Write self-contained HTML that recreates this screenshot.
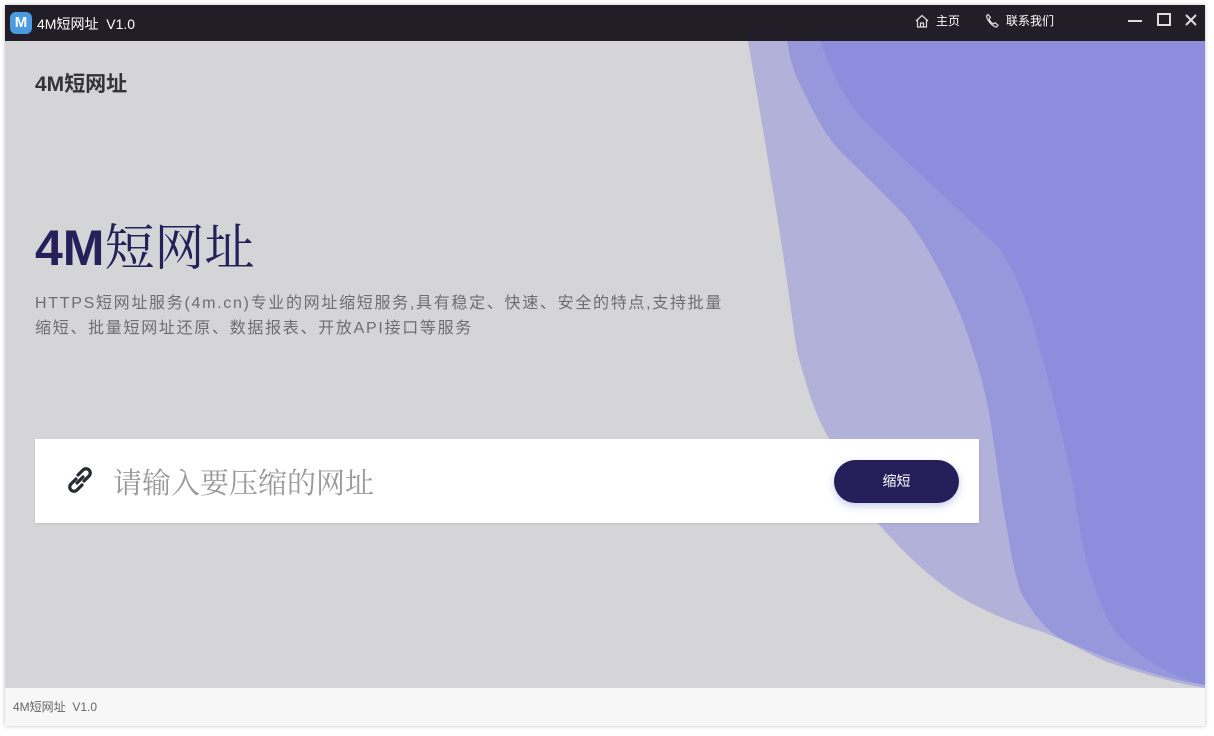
<!DOCTYPE html>
<html><head><meta charset="utf-8"><style>
*{margin:0;padding:0;box-sizing:border-box}
html,body{width:1214px;height:736px;overflow:hidden;background:#fff;font-family:"Liberation Sans","Noto Sans CJK SC",sans-serif}
.win{position:absolute;left:5px;top:5px;width:1200px;height:721px;box-shadow:0 0 4px rgba(0,0,0,.25)}
.tb{position:absolute;left:0;top:0;width:1200px;height:36px;background:#221e28;color:#fff}
.logo{position:absolute;left:5px;top:7px;width:22px;height:22px;border-radius:6px;background:#4a9be0;color:#fff;font-weight:bold;font-size:15px;text-align:center;line-height:22px}
.tt{position:absolute;left:32px;top:9px;font-size:14px}
.nav{position:absolute;top:7px;font-size:12px;color:#fff}
.main{position:absolute;left:0;top:36px;width:1200px;height:647px;background:#d5d5d7;overflow:hidden}
.foot{position:absolute;left:0;top:683px;width:1200px;height:38px;background:#f7f7f7;font-size:12px;color:#666;padding:10px 0 0 8px}
.h1{position:absolute;left:30px;top:27px;font-size:21px;font-weight:bold;color:#333}
.h2{position:absolute;left:30px;top:168px;font-size:50px;font-weight:bold;color:#26205a;line-height:70px}
.cj{font-family:"Noto Serif CJK SC",serif;font-weight:normal}
.desc{position:absolute;left:30px;top:250px;font-size:16px;line-height:25px;color:#6e6e72;width:760px;letter-spacing:1.7px;white-space:nowrap}
.card{position:absolute;left:30px;top:398px;width:944px;height:84px;background:#fff;box-shadow:0 1px 2px rgba(0,0,0,.1)}
.ph{position:absolute;left:78px;top:22px;font-size:29px;color:#9a9a9a;font-family:"Noto Serif CJK SC",serif}
.btn{position:absolute;left:799px;top:21px;width:125px;height:43px;border-radius:22px;background:#251e58;color:#fff;font-size:14px;text-align:center;line-height:43px;box-shadow:0 3px 8px rgba(80,80,200,.3)}
</style></head><body>
<div class="win">
<div class="tb">
<div class="logo">M</div>
<div class="tt">4M短网址&nbsp; V1.0</div>
<svg style="position:absolute;left:909px;top:8px" width="16" height="16" viewBox="0 0 16 16" fill="none" stroke="#ddd" stroke-width="1.2"><path d="M2 8L8 2.5 14 8M3.5 6.5V14h9V6.5M6.5 14v-4h3v4"/></svg>
<div class="nav" style="left:931px">主页</div>
<svg style="position:absolute;left:980px;top:8px" width="14" height="16" viewBox="0 0 14 16" fill="none" stroke="#ddd" stroke-width="1.2"><path d="M3 1.5l2.5 3-1.5 1.5c.8 2 2.3 3.8 4.3 5l1.7-1.3 3 2.5-1.6 2C7 13 2.5 8 1.5 3z"/></svg>
<div class="nav" style="left:1001px">联系我们</div>
<div style="position:absolute;left:1123px;top:15px;width:14px;height:2px;background:#ddd"></div>
<div style="position:absolute;left:1152px;top:8px;width:14px;height:13px;border:2px solid #ddd"></div>
<svg style="position:absolute;left:1179px;top:8px" width="14" height="14" viewBox="0 0 14 14" stroke="#ddd" stroke-width="2"><path d="M2 2l10 10M12 2L2 12"/></svg>
</div>
<div class="main">
<svg style="position:absolute;left:0;top:0" width="1200" height="647" viewBox="5 41 1200 647">
<path d="M748 41 C758 100 765 140 770 173 C785 260 792 320 797 351 C810 400 818 420 830 440 C850 480 865 510 883 529 C915 565 945 590 973 604 C1000 618 1020 625 1040 631 C1070 642 1090 655 1107 662 C1150 676 1180 684 1205 688 L1205 41Z" fill="#b1b1da"/>
<path d="M787 41 C790 60 795 75 800 84 C812 110 825 135 840 151 C870 180 890 200 907 218 C930 250 945 280 957 307 C975 350 985 390 990 418 C998 470 1002 505 1007 529 C1012 560 1017 585 1023 596 C1040 625 1055 638 1073 644 C1120 665 1170 680 1205 685 L1205 41Z" fill="#9797dc"/>
<path d="M820 41 C835 80 850 110 873 129 C920 175 965 215 1000 249 C1020 280 1032 315 1040 351 C1055 400 1065 450 1073 484 C1078 520 1083 550 1090 573 C1100 605 1110 628 1123 640 C1150 665 1180 680 1205 685 L1205 41Z" fill="#8d8ddd"/>
</svg>
<div class="h1">4M<span style="font-family:'Noto Sans CJK SC',sans-serif">短网址</span></div>
<div class="h2">4M<span class="cj">短网址</span></div>
<div class="desc">HTTPS短网址服务(4m.cn)专业的网址缩短服务,具有稳定、快速、安全的特点,支持批量<br>缩短、批量短网址还原、数据报表、开放API接口等服务</div>
<div class="card">
<svg style="position:absolute;left:31px;top:26px" width="28" height="30" viewBox="0 0 28 30" fill="none" stroke="#2a2a35" stroke-width="3.2" stroke-linecap="round"><path d="M12 10l5-5a4 4 0 0 1 6 6l-5 5"/><path d="M16 20l-5 5a4 4 0 0 1-6-6l5-5"/><path d="M11 18l6-6"/></svg>
<div class="ph">请输入要压缩的网址</div>
<div class="btn">缩短</div>
</div>
</div>
<div class="foot">4M短网址&nbsp; V1.0</div>
</div>
</body></html>
